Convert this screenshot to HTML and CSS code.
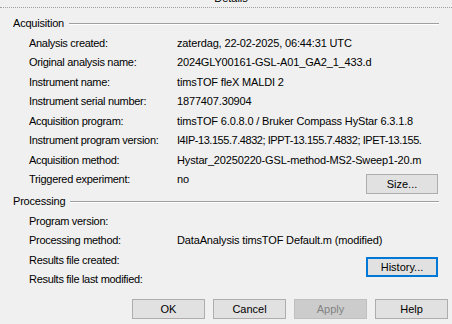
FILE: index.html
```html
<!DOCTYPE html>
<html lang="en">
<head>
    <meta charset="UTF-8">
    <meta name="viewport" content="width=device-width, initial-scale=1.0">
    <title>Details</title>
    <link rel="stylesheet" href="styles.css">
</head>
<body>
    <div class="caption"><span>Details</span></div>

    <div class="group">
        <div class="group-head">
            <span>Acquisition</span>
            <div class="rule"></div>
        </div>
        <div class="row"><span class="label">Analysis created:</span><span class="value">zaterdag, 22-02-2025, 06:44:31 UTC</span></div>
        <div class="row"><span class="label">Original analysis name:</span><span class="value">2024GLY00161-GSL-A01_GA2_1_433.d</span></div>
        <div class="row"><span class="label">Instrument name:</span><span class="value">timsTOF fleX MALDI 2</span></div>
        <div class="row"><span class="label">Instrument serial number:</span><span class="value">1877407.30904</span></div>
        <div class="row"><span class="label">Acquisition program:</span><span class="value">timsTOF 6.0.8.0 / Bruker Compass HyStar 6.3.1.8</span></div>
        <div class="row"><span class="label">Instrument program version:</span><span class="value dense">I4IP-13.155.7.4832; IPPT-13.155.7.4832; IPET-13.155.</span></div>
        <div class="row"><span class="label">Acquisition method:</span><span class="value">Hystar_20250220-GSL-method-MS2-Sweep1-20.m</span></div>
        <div class="row">
            <span class="label">Triggered experiment:</span><span class="value">no</span>
            <button class="btn side-btn size-btn">Size...</button>
        </div>
    </div>

    <div class="group processing">
        <div class="group-head">
            <span>Processing</span>
            <div class="rule"></div>
        </div>
        <div class="row"><span class="label">Program version:</span><span class="value"></span></div>
        <div class="row"><span class="label">Processing method:</span><span class="value">DataAnalysis timsTOF Default.m (modified)</span></div>
        <div class="row">
            <span class="label">Results file created:</span><span class="value"></span>
            <button class="btn side-btn history-btn focused">History...</button>
        </div>
        <div class="row"><span class="label">Results file last modified:</span><span class="value"></span></div>
    </div>

    <div class="footer">
        <button class="btn">OK</button>
        <button class="btn">Cancel</button>
        <button class="btn" disabled>Apply</button>
        <button class="btn">Help</button>
    </div>
</body>
</html>
```

FILE: styles.css
```css
:root {
    --window-bg: #f0f0f0;
    --btn-bg: #e1e1e1;
    --btn-border: #adadad;
    --rule-color: #a0a0a0;
    --focus-color: #0078d7;
}

* {
    margin: 0;
    padding: 0;
    box-sizing: border-box;
}

body {
    font-family: 'Liberation Sans', Arial, sans-serif;
    font-size: 11px;
    color: #000;
    background-color: var(--window-bg);
    width: 452px;
    height: 324px;
    overflow: hidden;
}

.caption {
    height: 8px;
    overflow: hidden;
    text-align: center;
    border-bottom: 1px dotted var(--rule-color);
    padding-left: 10px;
}

.caption span {
    display: block;
    line-height: 12px;
    margin-top: -8px;
}

.group {
    margin-top: 6px;
    line-height: 19.5px;
}

.group.processing {
    margin-top: 2.5px;
}

.group-head {
    display: flex;
    align-items: center;
    padding-left: 13px;
    padding-right: 13px;
    letter-spacing: -0.2px;
}

.group-head .rule {
    flex: 1;
    margin-left: 5px;
    border-top: 1px solid var(--rule-color);
    border-bottom: 1px solid #fff;
}

.row {
    display: flex;
    align-items: flex-start;
    padding-left: 29px;
    padding-right: 14px;
    height: 19.5px;
    white-space: nowrap;
}

.label {
    width: 148px;
    flex-shrink: 0;
    letter-spacing: -0.3px;
}

.value {
    flex: 1;
    letter-spacing: -0.15px;
}

.value.dense {
    letter-spacing: -0.45px;
}

.btn {
    font-family: inherit;
    font-size: 11px;
    color: #000;
    background-color: var(--btn-bg);
    border: 1px solid var(--btn-border);
    width: 73px;
    height: 20px;
    line-height: 18px;
    text-align: center;
}

.btn:disabled {
    background-color: #cccccc;
    border-color: #bfbfbf;
    color: #838383;
}

.side-btn {
    width: 72px;
    flex-shrink: 0;
}

.size-btn {
    margin-top: 3.5px;
}

.history-btn {
    margin-top: 6px;
}

.btn.focused {
    border: 2px solid var(--focus-color);
    line-height: 16px;
}

.footer {
    display: flex;
    justify-content: flex-end;
    gap: 8px;
    padding-right: 4px;
    margin-top: 9px;
}
```
